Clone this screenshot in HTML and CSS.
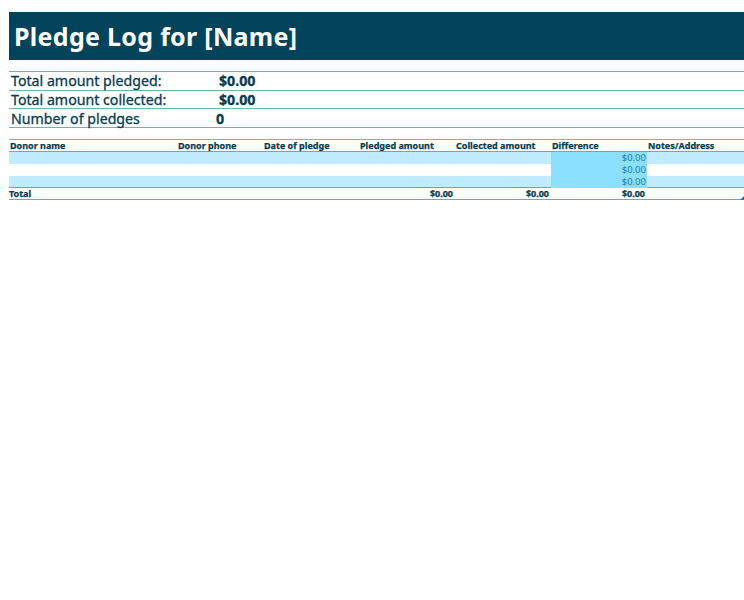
FILE: index.html
```html
<!DOCTYPE html>
<html lang="en">
<head>
<meta charset="utf-8">
<title>Pledge Log</title>
<link rel="stylesheet" href="styles.css">
</head>
<body>
<h1 class="banner">Pledge Log for [Name]</h1>
<section class="summary">
  <div class="summary-row"><span>Total amount pledged:</span><b class="amt">$0.00</b></div>
  <div class="summary-row"><span>Total amount collected:</span><b class="amt">$0.00</b></div>
  <div class="summary-row"><span>Number of pledges</span><b class="count">0</b></div>
</section>
<section class="log">
  <div class="row head">
    <span>Donor name</span><span>Donor phone</span><span>Date of pledge</span><span>Pledged amount</span><span>Collected amount</span><span>Difference</span><span class="notes">Notes/Address</span>
  </div>
  <div class="row data band"><i></i><i></i><i></i><i></i><i></i><span class="diff">$0.00</span><i></i></div>
  <div class="row data"><i></i><i></i><i></i><i></i><i></i><span class="diff">$0.00</span><i></i></div>
  <div class="row data band last"><i></i><i></i><i></i><i></i><i></i><span class="diff">$0.00</span><i></i></div>
  <div class="row total">
    <span>Total</span><i></i><i></i><span class="num">$0.00</span><span class="num">$0.00</span><span class="num">$0.00</span><i></i>
    <svg class="handle" width="4" height="4" viewBox="0 0 4 4"><path d="M4 0V4H0Z" fill="#2f6f9f"/></svg>
  </div>
</section>
</body>
</html>
```
FILE: styles.css
```css
html, body { margin: 0; padding: 0; background: #fff; }
body { padding: 12px 0 0 9px; font-family: "Noto Sans", "DejaVu Sans", sans-serif; color: #073c52; height: 588px; overflow: hidden; }
.banner {
  margin: 0; height: 48px; box-sizing: border-box; background: #03435c; color: #fff;
  font-size: 25px; font-weight: 700; line-height: 48px; padding-left: 5px; letter-spacing: 0.3px;
}
.summary { margin-top: 11px; border-top: 1px solid #6db5a5; }
.summary-row {
  height: 18.67px; box-sizing: border-box; border-bottom: 1px solid #6db5a5;
  display: flex; align-items: center; padding-left: 2px; font-size: 14.2px; line-height: 17px;
  -webkit-text-stroke: 0.3px #073c52;
}
.summary-row span { width: 208px; }
.summary-row .count { margin-left: -3px; }
.log { margin-top: 11px; position: relative; }
.row { display: grid; grid-template-columns: 168px 86px 96px 96px 96px 96px 97px; box-sizing: border-box; }
.head { height: 13px; border-top: 1px solid #6fb7d6; border-bottom: 1px solid #5badd0; font-size: 9px; font-weight: 700; line-height: 11px; -webkit-text-stroke: 0.25px #073c52; }
.head span { padding-left: 1px; white-space: nowrap; }
.data { height: 12px; }
.band { background: #bfedff; }
.last { border-bottom: 1px solid #5badd0; }
.diff { background: #8ce0ff; color: #1f7ea6; font-size: 9.5px; line-height: 12px; text-align: right; padding-right: 1px; }
.total { height: 12px; border-bottom: 1px solid #5badd0; font-size: 9px; font-weight: 700; line-height: 11px; position: relative; -webkit-text-stroke: 0.25px #073c52; }
.total .num { text-align: right; padding-right: 2px; }
.handle { position: absolute; right: 0; bottom: -1px; }
```
